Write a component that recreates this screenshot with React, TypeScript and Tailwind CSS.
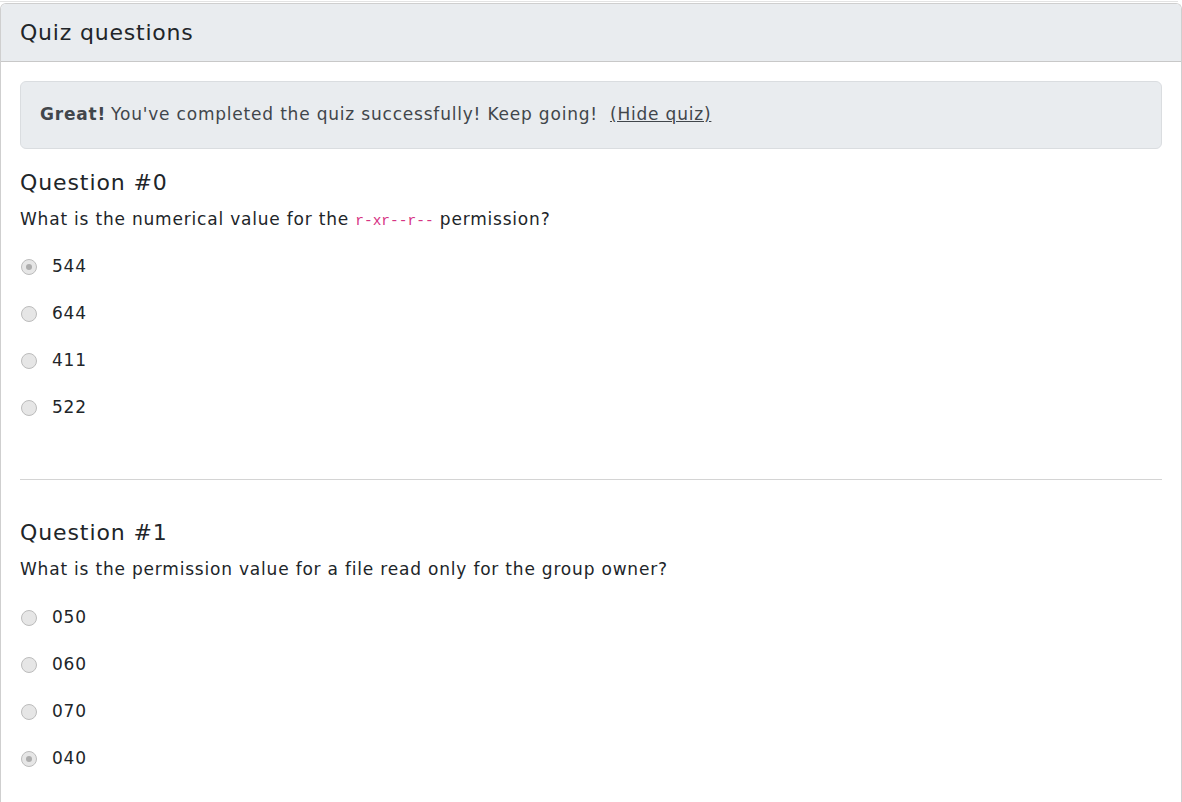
import React from "react";

const font = { fontFamily: '"DejaVu Sans", "Noto Sans", sans-serif' };

function Radio({ checked }: { checked?: boolean }) {
  return (
    <span className="flex h-[16px] w-[16px] shrink-0 items-center justify-center rounded-full border border-[#bcbcbc] bg-[#e6e6e6]">
      {checked && <span className="h-[6px] w-[6px] rounded-full bg-[#adadad]" />}
    </span>
  );
}

function Option({ label, checked }: { label: string; checked?: boolean }) {
  return (
    <div className="flex h-[47px] items-center gap-[15px] pl-[1px]">
      <Radio checked={checked} />
      <span className="text-[17px] tracking-[0.8px] text-[#212529]">{label}</span>
    </div>
  );
}

export default function App() {
  return (
    <div className="min-h-screen bg-white" style={font}>
      <div className="mt-[1px] h-[1px] w-[1178px] bg-[#e3e3e3]" />
      <div className="mt-[1px] w-[1182px] overflow-hidden rounded-t-[6px] border border-b-0 border-[#cfcfcf]">
        <div className="flex h-[58px] items-center border-b border-[#c8c8c8] bg-[#e9ecef] px-[19px]">
          <h5 className="text-[22px] tracking-[0.8px] text-[#212529]">Quiz questions</h5>
        </div>
        <div className="px-[19px] pt-[19px] pb-[20px]">
          <div className="flex h-[68px] items-center rounded-[6px] border border-[#dadde0] bg-[#e9ecef] px-[19px] text-[17px] tracking-[0.8px] text-[#41464b]">
            <span className="font-bold">Great!</span>
            <span className="ml-[5px]">You've completed the quiz successfully! Keep going!</span>
            <span className="ml-[12px] underline">(Hide quiz)</span>
          </div>

          <div className="mt-[20px]">
            <h4 className="text-[22px] leading-[28px] tracking-[0.9px] text-[#212529]">Question #0</h4>
            <p className="mt-[10px] text-[17px] leading-[24px] tracking-[0.8px] text-[#212529]">
              What is the numerical value for the{" "}
              <code
                className="text-[14.5px] tracking-normal text-[#d63384]"
                style={{ fontFamily: '"Liberation Mono", monospace' }}
              >
                r-xr--r--
              </code>{" "}
              permission?
            </p>
            <div className="mt-[10px]">
              <Option label="544" checked />
              <Option label="644" />
              <Option label="411" />
              <Option label="522" />
            </div>
          </div>

          <div className="mt-[48px] h-px bg-[#d4d4d4]" />

          <div className="mt-[39px]">
            <h4 className="text-[22px] leading-[28px] tracking-[0.9px] text-[#212529]">Question #1</h4>
            <p className="mt-[10px] text-[17px] leading-[24px] tracking-[0.8px] text-[#212529]">
              What is the permission value for a file read only for the group owner?
            </p>
            <div className="mt-[13px]">
              <Option label="050" />
              <Option label="060" />
              <Option label="070" />
              <Option label="040" checked />
            </div>
          </div>
        </div>
      </div>
    </div>
  );
}
